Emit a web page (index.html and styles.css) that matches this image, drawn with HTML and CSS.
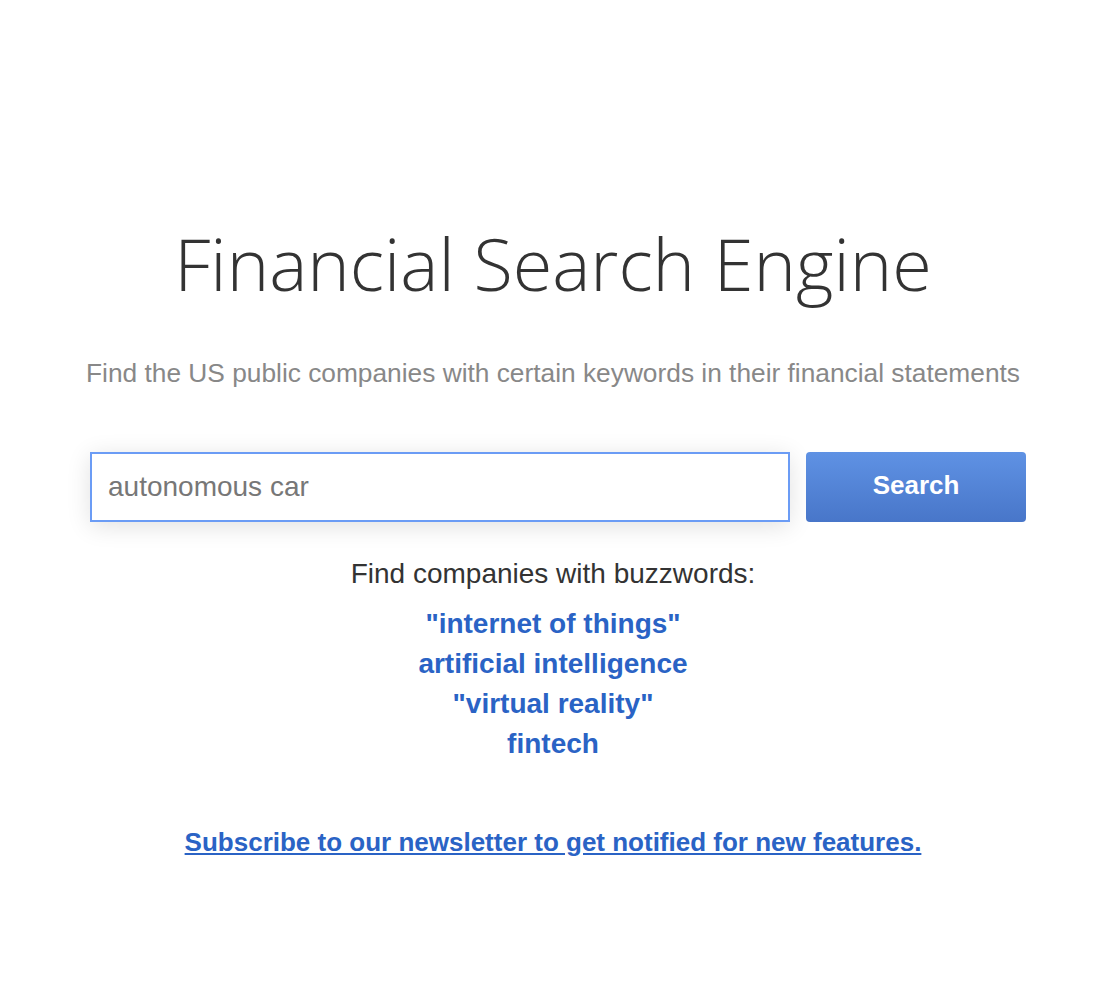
FILE: index.html
```html
<!DOCTYPE html>
<html>
<head>
<meta charset="utf-8">
<link rel="stylesheet" href="styles.css">
</head>
<body>
<main class="page">
  <h1 class="title">Financial Search Engine</h1>
  <p class="subtitle">Find the US public companies with certain keywords in their financial statements</p>
  <form class="search-row">
    <input class="search-input" type="text" value="autonomous car">
    <button class="search-btn" type="button">Search</button>
  </form>
  <p class="buzz-label">Find companies with buzzwords:</p>
  <ul class="buzz-list">
    <li><a href="#">"internet of things"</a></li>
    <li><a href="#">artificial intelligence</a></li>
    <li><a href="#">"virtual reality"</a></li>
    <li><a href="#">fintech</a></li>
  </ul>
  <p class="subscribe"><a href="#">Subscribe to our newsletter to get notified for new features.</a></p>
</main>
</body>
</html>
```
FILE: styles.css
```css
html, body {
  margin: 0;
  padding: 0;
  background: #fff;
}
body {
  font-family: "Liberation Sans", Arial, sans-serif;
}
.page {
  width: 946px;
  margin-left: 80px;
  padding-top: 218px;
  display: flex;
  flex-direction: column;
  align-items: center;
  text-align: center;
}
.title {
  font-family: "Open Sans", sans-serif;
  font-weight: 300;
  font-size: 72px;
  line-height: 90px;
  color: #333;
  margin: 0;
}
.subtitle {
  font-size: 26.3px;
  line-height: 30px;
  color: #888;
  margin: 50px 0 0;
}
.search-row {
  align-self: stretch;
  display: flex;
  gap: 16px;
  padding-left: 10px;
  margin-top: 64px;
}
.search-input {
  box-sizing: border-box;
  width: 700px;
  height: 70px;
  border: 2px solid #6b9cf5;
  padding: 0 16px;
  font-family: "Liberation Sans", Arial, sans-serif;
  font-size: 28px;
  color: #777;
  outline: none;
  box-shadow: 0 4px 24px rgba(0,0,0,0.12);
}
.search-btn {
  width: 220px;
  height: 70px;
  border: none;
  border-radius: 4px;
  background: linear-gradient(#5f92e4, #4876c9);
  color: #fff;
  font-family: "Liberation Sans", Arial, sans-serif;
  font-weight: bold;
  font-size: 26px;
  padding: 0 0 4px;
}
.buzz-label {
  font-size: 28px;
  line-height: 40px;
  color: #333;
  margin: 32px 0 0;
}
.buzz-list {
  list-style: none;
  margin: 10px 0 0;
  padding: 0;
}
.buzz-list li {
  font-size: 28px;
  line-height: 40px;
  font-weight: bold;
}
.buzz-list a, .subscribe a {
  color: #2a63c5;
  text-decoration: none;
}
.subscribe {
  font-size: 26px;
  line-height: 30px;
  font-weight: bold;
  margin: 63px 0 0;
}
.subscribe a {
  text-decoration: underline;
}
```
